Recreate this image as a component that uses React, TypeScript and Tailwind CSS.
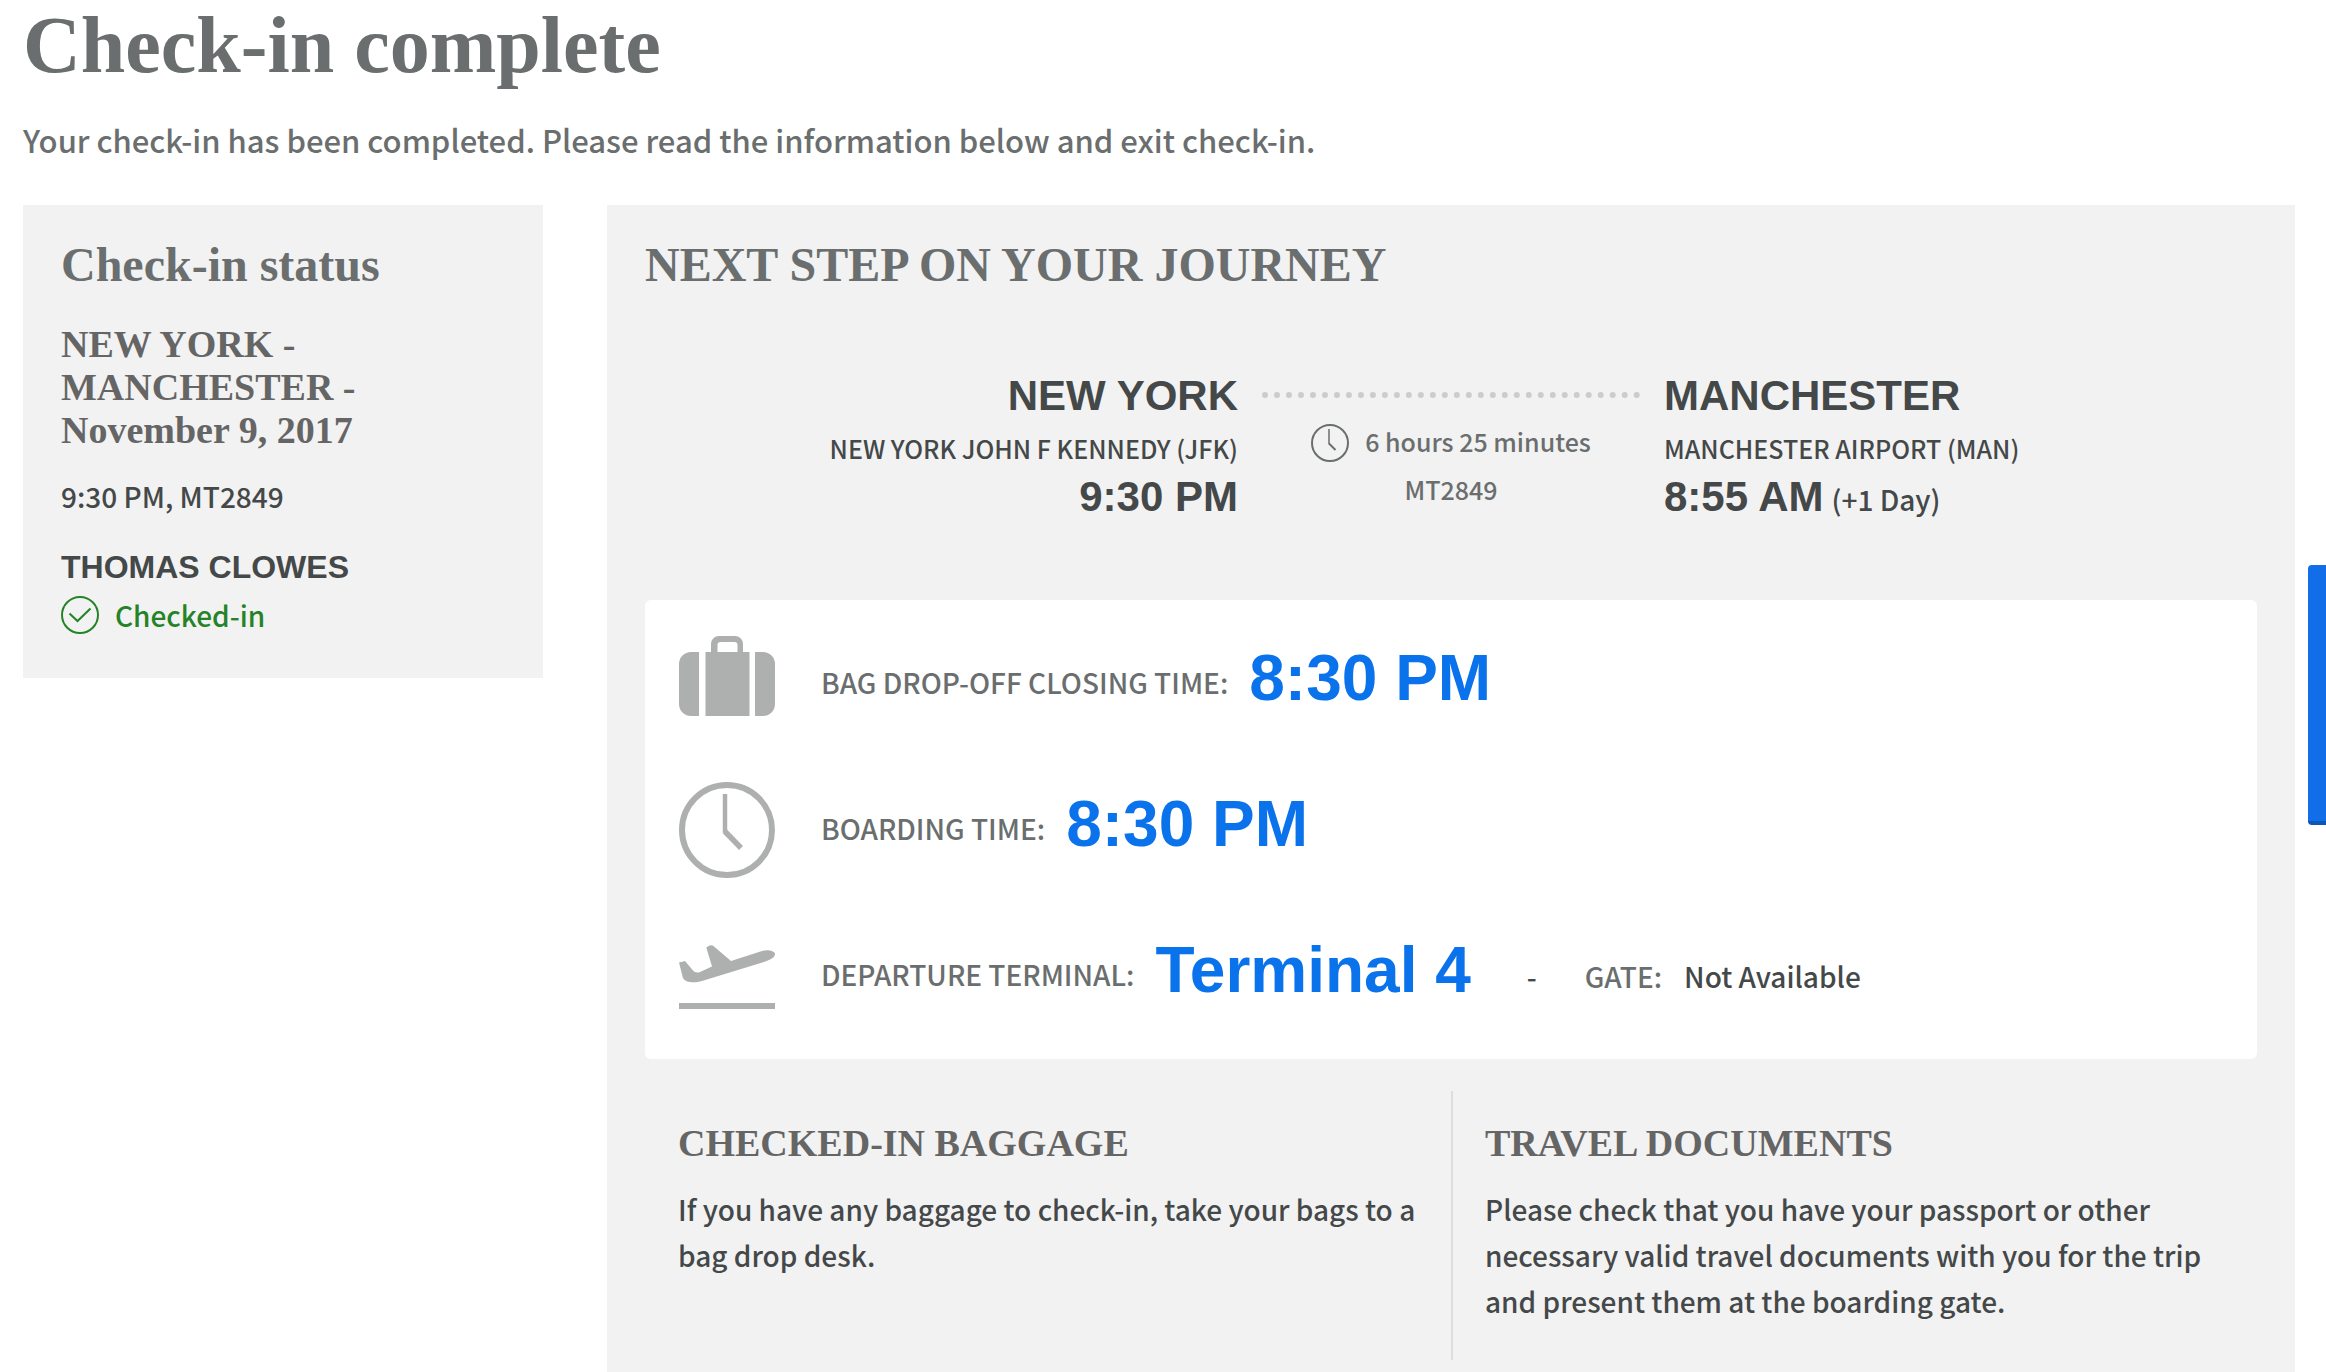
import React from 'react';

interface StepRowProps {
  icon: React.ReactNode;
  label: string;
  value: string;
  children?: React.ReactNode;
}

const SuitcaseIcon: React.FC = () => (
  <svg viewBox="0 0 96 96" className="size-24 shrink-0" fill="#aeb0af" aria-hidden="true">
    <path d="M20 16v64h-8a12 12 0 0 1-12-12V28a12 12 0 0 1 12-12z" />
    <path d="M76 16v64h8a12 12 0 0 0 12-12V28a12 12 0 0 0-12-12z" />
    <path d="M32 16V8a8 8 0 0 1 8-8h16a8 8 0 0 1 8 8v8h6.500v64h-44V16zM38.500 16h20V9a3 3 0 0 0-3-3h-14a3 3 0 0 0-3 3z" />
  </svg>
);

const BoardingIcon: React.FC = () => (
  <svg viewBox="0 0 96 96" className="size-24 shrink-0" fill="none" stroke="#aeb0af" aria-hidden="true">
    <circle cx="48" cy="48" r="45" strokeWidth="6" />
    <path d="M46 12v38" strokeWidth="4.500" />
    <path d="M45.500 49l16.500 17" strokeWidth="5.500" />
  </svg>
);

const TakeoffIcon: React.FC = () => (
  <svg viewBox="0 0 96 96" className="size-24 shrink-0" fill="#aeb0af" aria-hidden="true">
    <path d="M0 34.500L6 33L14 42.500Q16.500 45.500 21 44L33 38.500L27.300 19.500L30 17.800Q33 16.500 35 18.500L52 33L83 23C88 21.500 95.500 22.500 96 26C96 29 92 31.500 87 33.300L23 53C16 55 6 55 3.800 49.500Z" />
    <path d="M0 75h96v6H0z" />
  </svg>
);

const ClockIcon: React.FC = () => (
  <svg viewBox="0 0 38 38" className="size-[38px] shrink-0" fill="none" stroke="#6a6e6e" strokeWidth="2" aria-hidden="true">
    <circle cx="19" cy="19" r="18" />
    <path d="M18 5v15" strokeWidth="1.500" />
    <path d="M18 19.500l6.500 6.500" />
  </svg>
);

const CheckIcon: React.FC = () => (
  <svg viewBox="0 0 38 38" className="size-[38px] shrink-0" fill="none" stroke="#258327" strokeWidth="2" aria-hidden="true">
    <circle cx="19" cy="19" r="18" />
    <path d="M8.500 17.500l8 7.500l13-12.500" />
  </svg>
);

const StepRow: React.FC<StepRowProps> = ({ icon, label, value, children }) => (
  <div className="flex h-24">
    {icon}
    <div className="ml-[46px] flex items-center pb-[12px]">
      <span className="pt-2 text-[#6a6e6e]">{label}</span>
      <strong className="ml-[21px] font-['Liberation_Sans',sans-serif] text-[64px] leading-[72px] font-bold text-[#0a73eb]">
        {value}
      </strong>
      {children}
    </div>
  </div>
);

const App: React.FC = () => {
  return (
    <div className="flex min-h-screen flex-col bg-white pr-[31px] pl-[23px] font-['Noto_Sans_CJK_SC',sans-serif] text-[28px] leading-[46px] font-medium text-[#444849]">
      <h1 className="font-['Liberation_Serif',serif] text-[80px] leading-[90px] font-bold text-[#6a6e6e]">
        Check-in complete
      </h1>
      <p className="mt-[26px] mb-[41px] text-[31px] leading-[48px] text-[#6a6e6e]">
        Your check-in has been completed. Please read the information below and exit check-in.
      </p>

      <div className="grid flex-1 grid-cols-[minmax(0,65fr)_minmax(0,211fr)] gap-16">
        {/* Status */}
        <aside className="self-start bg-[#f2f2f2] px-[38px] pt-8 pb-10">
          <h2 className="font-['Liberation_Serif',serif] text-[48px] leading-[56px] font-bold text-[#6a6e6e]">
            Check-in status
          </h2>
          <h3 className="mt-[30px] font-['Liberation_Serif',serif] text-[38px] leading-[43px] font-bold text-[#656565]">
            NEW YORK -<br />
            MANCHESTER -<br />
            November 9, 2017
          </h3>
          <p className="mt-[21px]">9:30 PM, MT2849</p>
          <p className="mt-7 font-['Liberation_Sans',sans-serif] text-[32px] leading-[40px] font-bold">
            THOMAS CLOWES
          </p>
          <div className="mt-[5px] flex items-center gap-4 text-[#258327]">
            <CheckIcon />
            <span>Checked-in</span>
          </div>
        </aside>

        {/* Next step */}
        <main className="bg-[#f2f2f2] px-[38px] pt-8 pb-3">
          <h2 className="font-['Liberation_Serif',serif] text-[48px] leading-[56px] font-bold text-[#6a6e6e]">
            NEXT STEP ON YOUR JOURNEY
          </h2>

          <section className="mt-[76px] grid grid-cols-[1fr_426px_1fr]">
            <div className="text-right">
              <h3 className="font-['Liberation_Sans',sans-serif] text-[42px] leading-[54px] font-bold">NEW YORK</h3>
              <p className="text-[25px] leading-[50px]">NEW YORK JOHN F KENNEDY (JFK)</p>
              <p className="font-['Liberation_Sans',sans-serif] text-[42px] leading-[48px] font-bold">9:30 PM</p>
            </div>
            <div className="px-6 pt-[23px] text-center text-[25px] text-[#6a6e6e]">
              <div className="border-t-6 border-dotted border-[#cbcccc]" />
              <div className="mt-[20px] flex items-center justify-center gap-4">
                <ClockIcon />
                <span className="pb-1">6 hours 25 minutes</span>
              </div>
              <p className="leading-[42px]">MT2849</p>
            </div>
            <div>
              <h3 className="font-['Liberation_Sans',sans-serif] text-[42px] leading-[54px] font-bold">MANCHESTER</h3>
              <p className="text-[25px] leading-[50px]">MANCHESTER AIRPORT (MAN)</p>
              <p className="flex items-baseline gap-2 leading-[48px]">
                <strong className="font-['Liberation_Sans',sans-serif] text-[42px] font-bold">8:55 AM</strong>
                <span>(+1 Day)</span>
              </p>
            </div>
          </section>

          <section className="mt-[77px] flex flex-col gap-[50px] rounded-md bg-white px-[34px] pt-9 pb-[35px]">
            <StepRow icon={<SuitcaseIcon />} label="BAG DROP-OFF CLOSING TIME:" value="8:30 PM" />
            <StepRow icon={<BoardingIcon />} label="BOARDING TIME:" value="8:30 PM" />
            <StepRow icon={<TakeoffIcon />} label="DEPARTURE TERMINAL:" value="Terminal 4">
              <span className="ml-[56px] pt-3">-</span>
              <span className="ml-[48px] pt-3 text-[#6a6e6e]">GATE:</span>
              <span className="ml-[22px] pt-3">Not Available</span>
            </StepRow>
          </section>

          <section className="mt-8 grid grid-cols-2">
            <div className="pt-[31px] pr-[24px] pb-9 pl-[33px]">
              <h3 className="font-['Liberation_Serif',serif] text-[38px] leading-[43px] font-bold text-[#656565]">
                CHECKED-IN BAGGAGE
              </h3>
              <p className="mt-[21px]">
                If you have any baggage to check-in, take your bags to a bag drop desk.
              </p>
            </div>
            <div className="border-l-2 border-[#dcdddd] pt-[31px] pr-[33px] pb-9 pl-8">
              <h3 className="font-['Liberation_Serif',serif] text-[38px] leading-[43px] font-bold text-[#656565]">
                TRAVEL DOCUMENTS
              </h3>
              <p className="mt-[21px]">
                Please check that you have your passport or other necessary valid travel documents with you for the trip
                and present them at the boarding gate.
              </p>
            </div>
          </section>
        </main>
      </div>

      {/* Side tab */}
      <button
        type="button"
        aria-label="Feedback"
        className="fixed top-[565px] right-0 h-[260px] w-[18px] rounded-l-[4px] border-b-4 border-[#0d57b8] bg-[#126de8]"
      />
    </div>
  );
};

export default App;
